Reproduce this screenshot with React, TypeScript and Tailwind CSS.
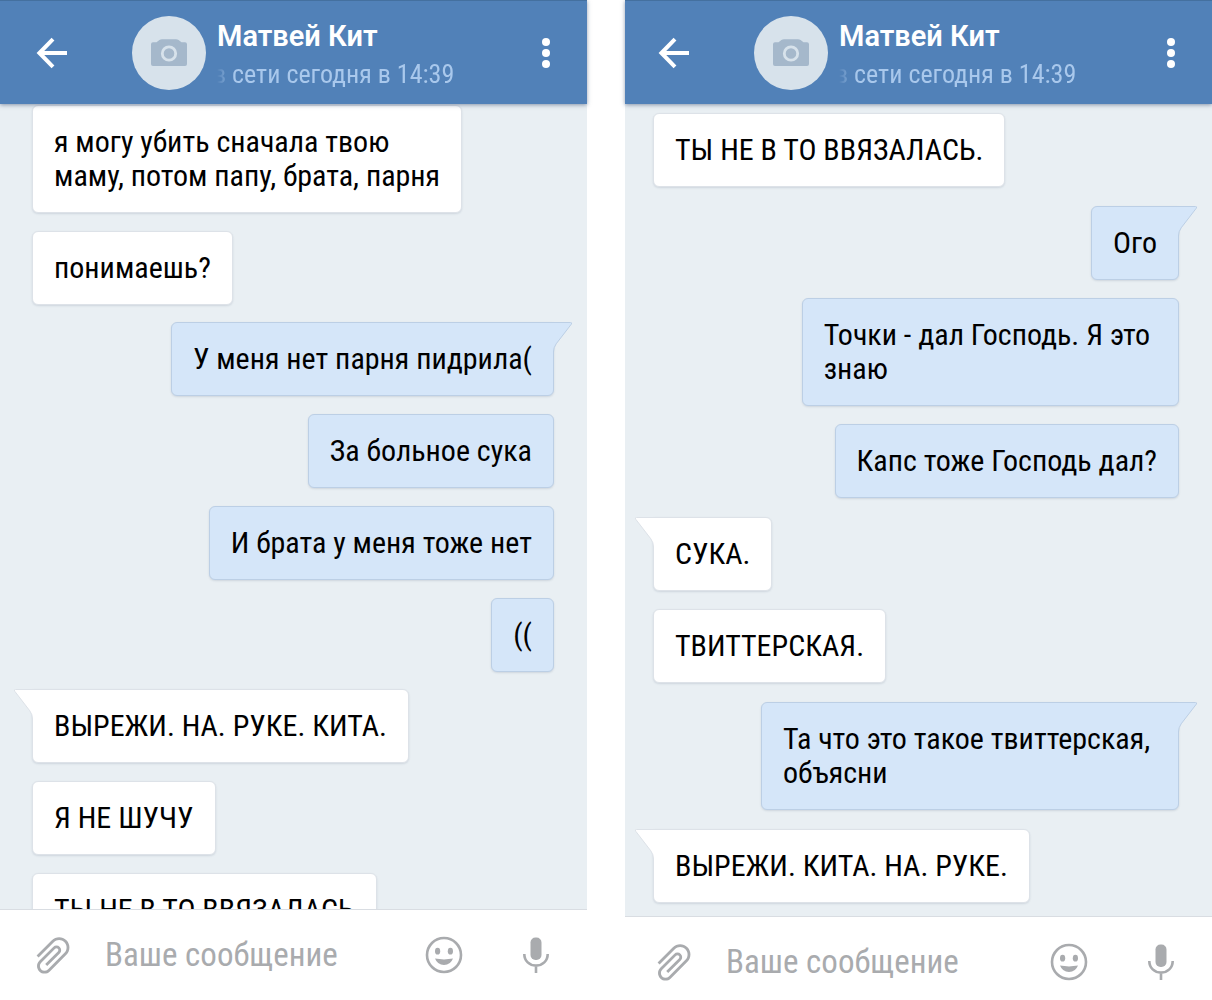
import { MdAttachFile } from 'react-icons/md';
import clsx from 'clsx';

type Message = {
  text: string;
  tail?: boolean;
};

type MessageGroup = {
  from: 'me' | 'them';
  messages: Message[];
};

type Chat = {
  id: string;
  groups: MessageGroup[];
  headerClass: string;
  listClass: string;
  composerClass: string;
};

const chats: Chat[] = [
  {
    id: 'left',
    headerClass: 'pl-9',
    listClass: 'gap-[17px] pt-px pl-8',
    composerClass: 'h-[91px] pl-[30px]',
    groups: [
      {
        from: 'them',
        messages: [
          { text: 'я могу убить сначала твою \nмаму, потом папу, брата, парня' },
          { text: 'понимаешь?' },
        ],
      },
      {
        from: 'me',
        messages: [
          { text: 'У меня нет парня пидрила(', tail: true },
          { text: 'За больное сука' },
          { text: 'И брата у меня тоже нет' },
          { text: '((' },
        ],
      },
      {
        from: 'them',
        messages: [
          { text: 'ВЫРЕЖИ. НА. РУКЕ. КИТА.', tail: true },
          { text: 'Я НЕ ШУЧУ' },
          { text: 'ТЫ НЕ В ТО ВВЯЗАЛАСЬ' },
        ],
      },
    ],
  },
  {
    id: 'right',
    headerClass: 'pl-[33px]',
    listClass: 'gap-[19px] pt-[9px] pl-7',
    composerClass: 'h-[84px] pt-[7px] pl-[26px]',
    groups: [
      { from: 'them', messages: [{ text: 'ТЫ НЕ В ТО ВВЯЗАЛАСЬ.' }] },
      {
        from: 'me',
        messages: [
          { text: 'Ого', tail: true },
          { text: 'Точки - дал Господь. Я это \nзнаю' },
          { text: 'Капс тоже Господь дал?' },
        ],
      },
      {
        from: 'them',
        messages: [{ text: 'СУКА.', tail: true }, { text: 'ТВИТТЕРСКАЯ.' }],
      },
      {
        from: 'me',
        messages: [{ text: 'Та что это такое твиттерская, \nобъясни', tail: true }],
      },
      { from: 'them', messages: [{ text: 'ВЫРЕЖИ. КИТА. НА. РУКЕ.', tail: true }] },
    ],
  },
];

const BackIcon = () => (
  <svg width="32" height="32" viewBox="0 0 32 32" fill="none" stroke="currentColor" strokeWidth="4">
    <path d="M31 16H4M17 2.2L3.4 16L17 29.8" />
  </svg>
);

const CameraIcon = () => (
  <svg width="38" height="30" viewBox="0 0 38 30">
    <path
      d="M3 4.2H6.5L9.4 2Q10.6 1.2 12 1.2H26Q27.4 1.2 28.6 2L31.5 4.2H35Q37 4.2 37 6.2V26Q37 28 35 28H3Q1 28 1 26V6.2Q1 4.2 3 4.2Z"
      fill="#a5b8cb"
    />
    <circle cx="19" cy="15.5" r="6.7" fill="#a5b8cb" stroke="#d7e2eb" strokeWidth="2.8" />
  </svg>
);

const MoreIcon = () => (
  <svg width="10" height="32" viewBox="0 0 10 32" fill="currentColor">
    <circle cx="5" cy="5" r="4" />
    <circle cx="5" cy="16" r="4" />
    <circle cx="5" cy="27" r="4" />
  </svg>
);

const SmileIcon = () => (
  <svg width="38" height="38" viewBox="0 0 38 38">
    <circle cx="19" cy="19" r="17" fill="none" stroke="currentColor" strokeWidth="2.6" />
    <ellipse cx="12.6" cy="15.2" rx="2.6" ry="3.4" fill="currentColor" />
    <ellipse cx="25.4" cy="15.2" rx="2.6" ry="3.4" fill="currentColor" />
    <path d="M10 22.6Q19 24.2 28 22.6Q25.6 29 19 29Q12.4 29 10 22.6Z" fill="currentColor" />
  </svg>
);

const MicIcon = () => (
  <svg width="26" height="38" viewBox="0 0 26 38">
    <rect x="7.5" y="1.5" width="11" height="22.5" rx="5" fill="currentColor" />
    <path
      d="M1.3 18C1.3 25 6.5 29.6 13 29.6S24.7 25 24.7 18M13 29.6V37"
      fill="none"
      stroke="currentColor"
      strokeWidth="2.6"
    />
  </svg>
);

const Tail = ({ from }: { from: MessageGroup['from'] }) => (
  <svg
    width="22"
    height="32"
    viewBox="0 0 22 32"
    className={clsx('absolute -top-px', from === 'me' ? 'left-full -ml-0.5' : 'right-full -mr-0.5 -scale-x-100')}
  >
    <path
      d="M0 .5H19.5Q21.5 .5 20.3 2.2L5.2 21.8Q2.5 25.5 2.5 30V32H0Z"
      fill={from === 'me' ? '#d5e6f9' : '#ffffff'}
    />
    <path
      d="M0 .5H19.5Q21.5 .5 20.3 2.2L5.2 21.8Q2.5 25.5 2.5 30V32"
      fill="none"
      stroke={from === 'me' ? '#bccfe5' : '#dde2e8'}
    />
  </svg>
);

const Bubble = ({ message, from }: { message: Message; from: MessageGroup['from'] }) => (
  <li
    className={clsx(
      'relative rounded-md border px-[21px] py-[19px] text-[30px] leading-[34px] whitespace-pre text-black shadow-[0_1px_2px_rgba(60,80,110,0.15)]',
      from === 'me' ? 'border-[#bccfe5] bg-[#d5e6f9]' : 'border-[#dde2e8] bg-white',
      message.tail && (from === 'me' ? 'rounded-tr-none' : 'rounded-tl-none'),
    )}
  >
    {message.tail && <Tail from={from} />}
    {message.text}
  </li>
);

const Header = ({ className }: { className: string }) => (
  <header
    className={clsx(
      'relative z-10 flex h-[104px] shrink-0 items-center border-t border-[#44709f] bg-[#5181b8] pr-9 text-white shadow-[0_1px_4px_rgba(40,60,100,0.5)]',
      className,
    )}
  >
    <button type="button" aria-label="Назад">
      <BackIcon />
    </button>
    <div className="ml-16 flex size-[74px] shrink-0 items-center justify-center rounded-full bg-[#d7e2eb]">
      <CameraIcon />
    </div>
    <div className="ml-[11px] min-w-0 flex-1 pt-1">
      <h1 className="font-[Roboto] text-[29px] leading-[38px] font-semibold">Матвей Кит</h1>
      <p className="-ml-1 text-[26px] leading-[38px] whitespace-nowrap text-[#a9c8ec] [mask-image:linear-gradient(to_right,transparent_4px,black_22px)]">
        в сети сегодня в 14:39
      </p>
    </div>
    <button type="button" aria-label="Меню">
      <MoreIcon />
    </button>
  </header>
);

const Composer = ({ id, className }: { id: string; className: string }) => (
  <form
    className={clsx(
      'flex shrink-0 items-center border-t border-[#d9dde2] bg-white pr-[38px] text-[#a9abae]',
      className,
    )}
  >
    <button type="button" aria-label="Прикрепить">
      <MdAttachFile size={45} className="rotate-[225deg]" />
    </button>
    <input
      id={`message-${id}`}
      type="text"
      aria-label="Ваше сообщение"
      placeholder="Ваше сообщение"
      className="ml-[30px] min-w-0 flex-1 bg-transparent text-[33px] leading-10 outline-none placeholder:text-[#a9abae]"
    />
    <button type="button" aria-label="Смайлы">
      <SmileIcon />
    </button>
    <button type="button" aria-label="Голосовое сообщение" className="ml-[60px]">
      <MicIcon />
    </button>
  </form>
);

const ChatScreen = ({ chat }: { chat: Chat }) => (
  <section className="flex min-w-0 flex-1 flex-col bg-[#e9eff3]">
    <Header className={chat.headerClass} />
    <div className={clsx('flex min-h-0 flex-1 flex-col overflow-hidden pr-[33px]', chat.listClass)}>
      {chat.groups.map((group, i) => (
        <ul
          key={i}
          className={clsx('flex shrink-0 flex-col gap-[18px]', group.from === 'me' ? 'items-end' : 'items-start')}
        >
          {group.messages.map((message) => (
            <Bubble key={message.text} message={message} from={group.from} />
          ))}
        </ul>
      ))}
    </div>
    <Composer id={chat.id} className={chat.composerClass} />
  </section>
);

export default function App() {
  return (
    <main className="flex h-screen gap-[38px] overflow-hidden bg-white font-['Roboto_Condensed','Liberation_Sans_Narrow',Roboto,sans-serif]">
      {chats.map((chat) => (
        <ChatScreen key={chat.id} chat={chat} />
      ))}
    </main>
  );
}
